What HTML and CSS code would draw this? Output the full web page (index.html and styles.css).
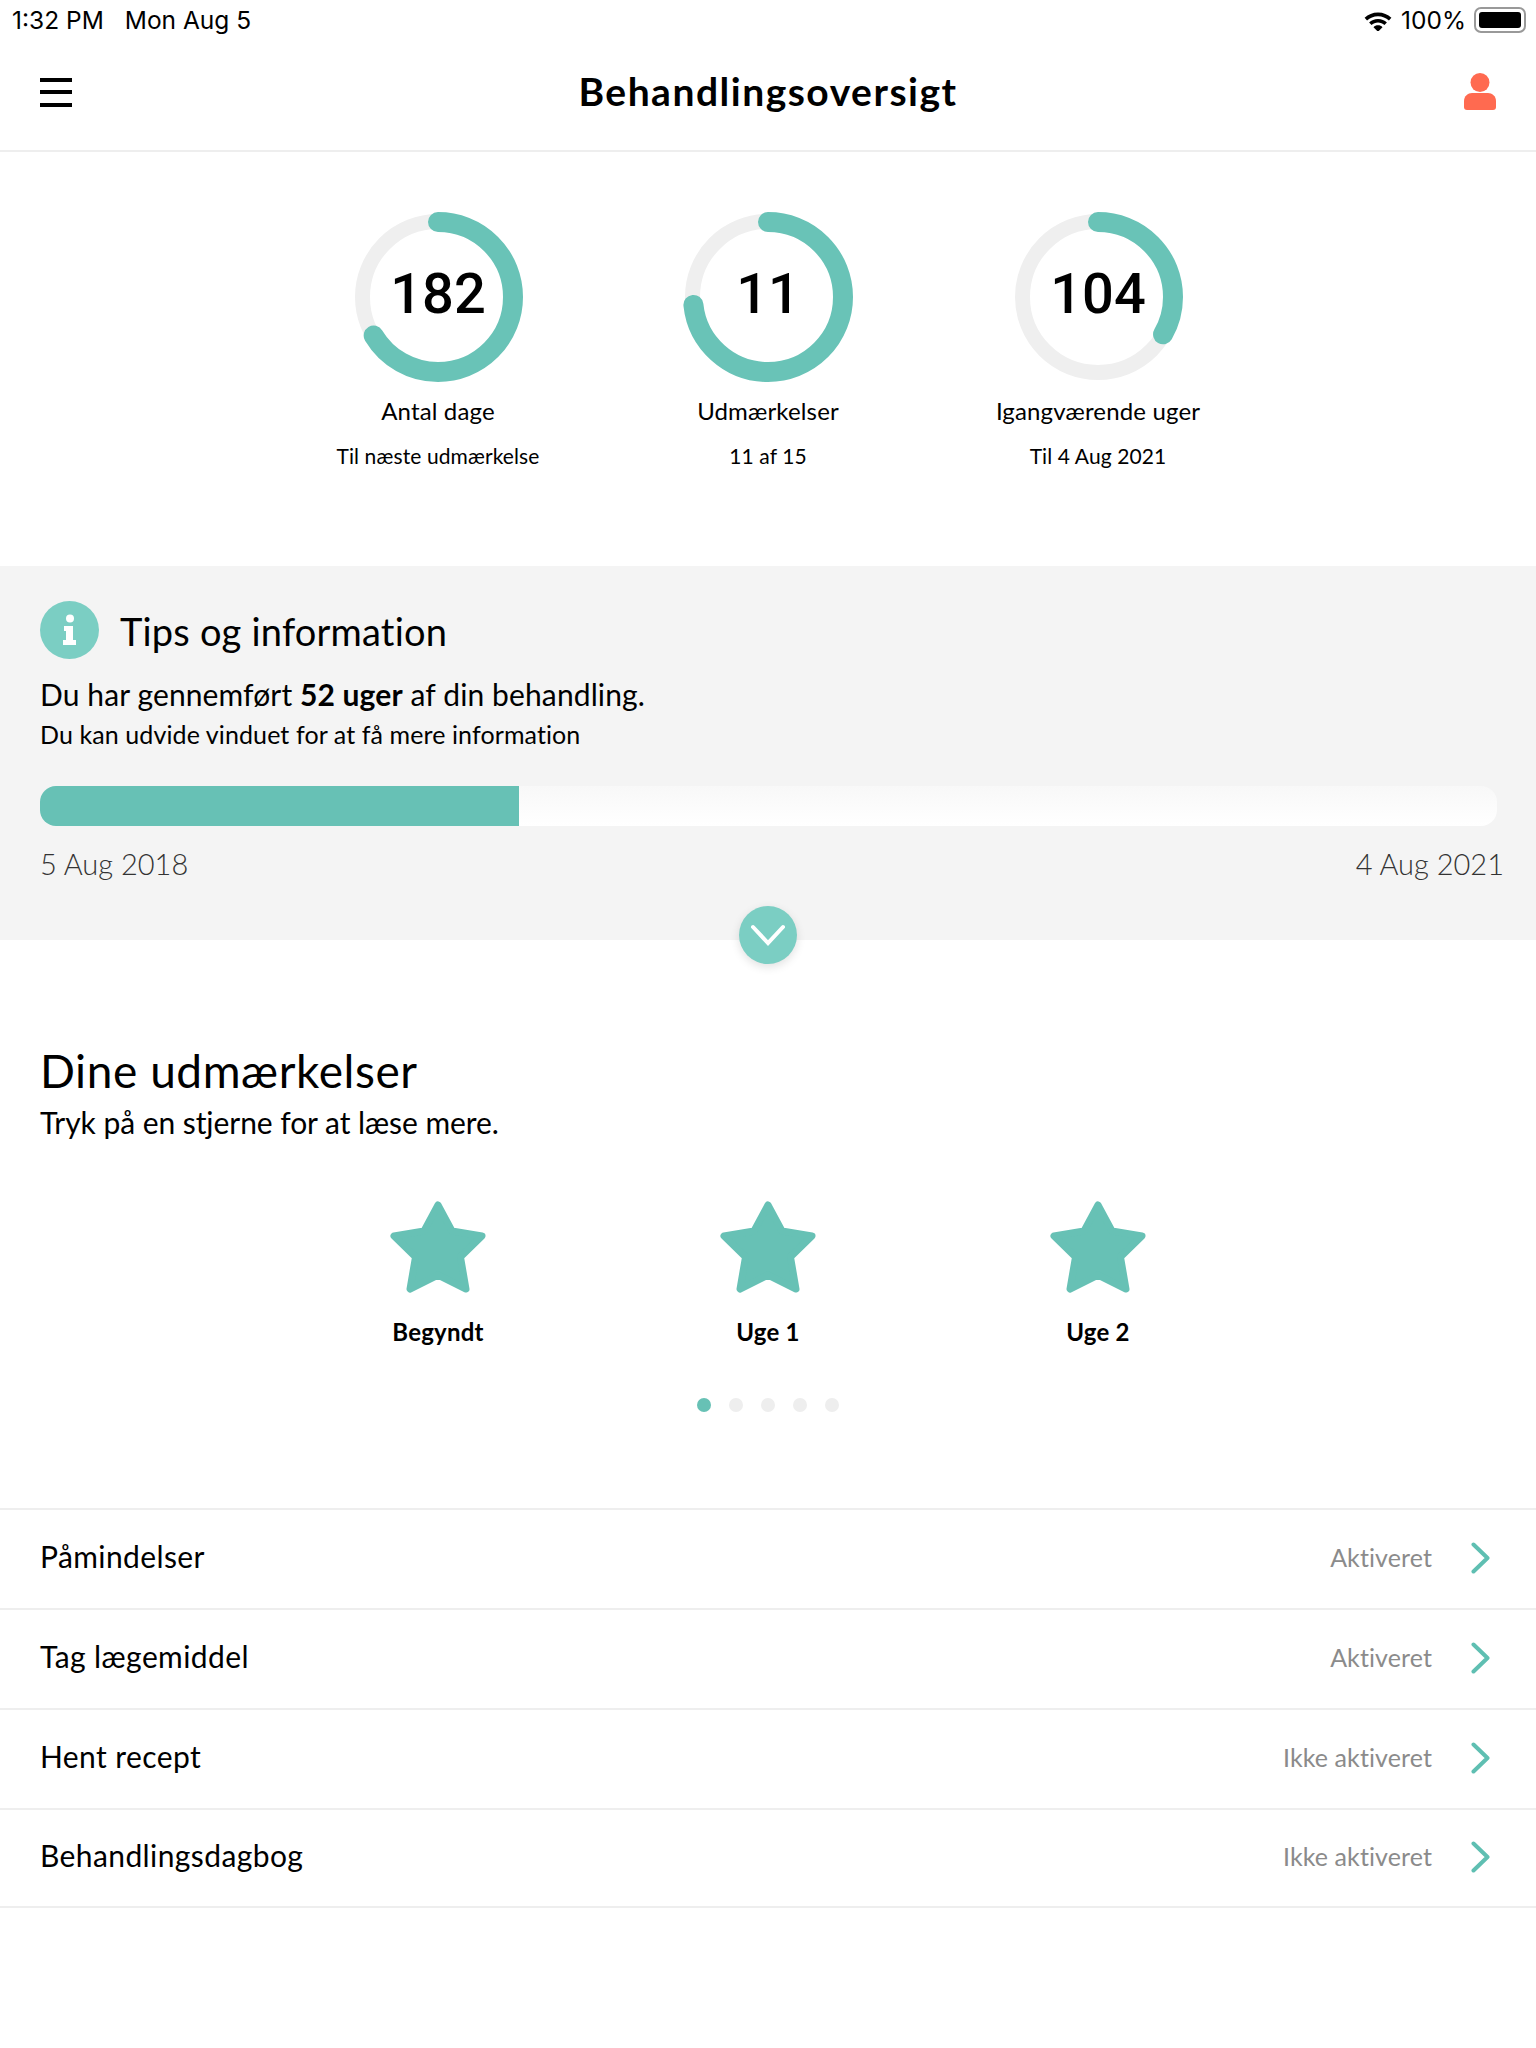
FILE: index.html
```html
<!DOCTYPE html>
<html lang="da">
<head>
	<meta charset="UTF-8">
	<title>Behandlingsoversigt</title>
	<link rel="stylesheet" href="styles.css">
</head>
<body>
	<div class="statusbar">
		<div class="status-left"><span>1:32 PM</span><span>Mon Aug 5</span></div>
		<div class="status-right">
			<svg class="wifi" width="30" height="22" viewBox="0 0 28 20"><path d="M14 3C9 3 4.800 4.900 1.500 8l2.300 2.400C6.500 7.900 10 6.400 14 6.400s7.500 1.500 10.200 4L26.500 8C23.200 4.900 19 3 14 3z"/><path d="M14 9c-3.300 0-6.200 1.300-8.300 3.300L8 14.700c1.600-1.500 3.700-2.400 6-2.400s4.400 0.900 6 2.400l2.300-2.400C20.200 10.300 17.300 9 14 9z"/><path d="M14 15c-1.700 0-3.100 0.600-4.200 1.700L14 21l4.200-4.300C17.100 15.600 15.700 15 14 15z"/></svg>
			<span>100%</span>
			<div class="battery"><div class="battery-level"></div></div>
		</div>
	</div>

	<header class="topbar">
		<div class="burger"><span></span><span></span><span></span></div>
		<h1>Behandlingsoversigt</h1>
		<svg class="person" width="32" height="38" viewBox="0 0 32 38"><ellipse cx="16" cy="9.500" rx="9.500" ry="9.500"/><path d="M0 34v-6c0-5 4-8 8-8h16c4 0 8 3 8 8v6c0 2-1 3-3 3H3c-2 0-3-1-3-3z"/></svg>
	</header>

	<section class="summary">
		<div class="stat">
			<div class="ring">
				<svg width="174" height="174" viewBox="0 0 174 174"><circle class="ring-track" cx="87" cy="87" r="75.500"/><circle class="ring-value" cx="87" cy="87" r="75" pathLength="100" stroke-dasharray="66.4 100"/></svg>
				<span class="ring-number">182</span>
			</div>
			<div class="stat-label">Antal dage</div>
			<div class="stat-sub">Til næste udmærkelse</div>
		</div>
		<div class="stat">
			<div class="ring">
				<svg width="174" height="174" viewBox="0 0 174 174"><circle class="ring-track" cx="87" cy="87" r="75.500"/><circle class="ring-value" cx="87" cy="87" r="75" pathLength="100" stroke-dasharray="73.3 100"/></svg>
				<span class="ring-number">11</span>
			</div>
			<div class="stat-label">Udmærkelser</div>
			<div class="stat-sub">11 af 15</div>
		</div>
		<div class="stat">
			<div class="ring">
				<svg width="174" height="174" viewBox="0 0 174 174"><circle class="ring-track" cx="87" cy="87" r="75.500"/><circle class="ring-value" cx="87" cy="87" r="75" pathLength="100" stroke-dasharray="33.3 100"/></svg>
				<span class="ring-number">104</span>
			</div>
			<div class="stat-label">Igangværende uger</div>
			<div class="stat-sub">Til 4 Aug 2021</div>
		</div>
	</section>

	<section class="tips">
		<div class="tips-head">
			<div class="info-icon">
				<svg width="16" height="32" viewBox="0 0 16 32"><circle cx="8" cy="4.500" r="4"/><path d="M2 12h9v14h3v5H1v-5h3v-9H2z"/></svg>
			</div>
			<h2>Tips og information</h2>
		</div>
		<p class="tips-text">Du har gennemført <b>52 uger</b> af din behandling.</p>
		<p class="tips-small">Du kan udvide vinduet for at få mere information</p>
		<div class="progress"><div class="progress-fill" style="width:32.9%"></div></div>
		<div class="dates"><span>5 Aug 2018</span><span>4 Aug 2021</span></div>
		<div class="toggle">
			<svg width="36" height="22" viewBox="0 0 36 22"><path d="M3 3l15 16L33 3"/></svg>
		</div>
	</section>

	<section class="awards">
		<h2>Dine udmærkelser</h2>
		<p class="awards-text">Tryk på en stjerne for at læse mere.</p>
		<div class="stars">
			<div class="star-item">
				<svg class="star" width="96" height="92" viewBox="0 0 96 92"><polygon points="48,4 62,30 92,35 70.500,56 76,88 48,74 20,88 25.500,56 4,35 34,30"/></svg>
				<div class="star-name">Begyndt</div>
			</div>
			<div class="star-item">
				<svg class="star" width="96" height="92" viewBox="0 0 96 92"><polygon points="48,4 62,30 92,35 70.500,56 76,88 48,74 20,88 25.500,56 4,35 34,30"/></svg>
				<div class="star-name">Uge 1</div>
			</div>
			<div class="star-item">
				<svg class="star" width="96" height="92" viewBox="0 0 96 92"><polygon points="48,4 62,30 92,35 70.500,56 76,88 48,74 20,88 25.500,56 4,35 34,30"/></svg>
				<div class="star-name">Uge 2</div>
			</div>
		</div>
		<div class="pager"><span class="on"></span><span></span><span></span><span></span><span></span></div>
	</section>

	<div class="list">
		<div class="row">
			<span class="row-name">Påmindelser</span>
			<span class="row-state">Aktiveret</span>
			<svg class="chevron" width="20" height="32" viewBox="0 0 20 32"><path d="M2.500 2.500L16.500 16L2.500 29.500"/></svg>
		</div>
		<div class="row">
			<span class="row-name">Tag lægemiddel</span>
			<span class="row-state">Aktiveret</span>
			<svg class="chevron" width="20" height="32" viewBox="0 0 20 32"><path d="M2.500 2.500L16.500 16L2.500 29.500"/></svg>
		</div>
		<div class="row">
			<span class="row-name">Hent recept</span>
			<span class="row-state">Ikke aktiveret</span>
			<svg class="chevron" width="20" height="32" viewBox="0 0 20 32"><path d="M2.500 2.500L16.500 16L2.500 29.500"/></svg>
		</div>
		<div class="row">
			<span class="row-name">Behandlingsdagbog</span>
			<span class="row-state">Ikke aktiveret</span>
			<svg class="chevron" width="20" height="32" viewBox="0 0 20 32"><path d="M2.500 2.500L16.500 16L2.500 29.500"/></svg>
		</div>
	</div>
</body>
</html>
```

FILE: styles.css
```css
* {
	box-sizing: border-box;
}
body {
	margin: 0;
	background: #fff;
	color: #000;
	font-family: "Lato", "Noto Sans", sans-serif;
}
h1, h2, p {
	margin: 0;
	font-weight: 400;
}

/* status bar */
.statusbar {
	display: flex;
	justify-content: space-between;
	align-items: center;
	height: 40px;
	padding: 0 10px 0 12px;
	font-family: "Inter", sans-serif;
	font-size: 24.500px;
}
.status-left {
	display: flex;
	gap: 21px;
}
.status-right {
	display: flex;
	align-items: center;
	gap: 8px;
}
.wifi {
	fill: #000;
}
.battery {
	width: 52px;
	height: 26px;
	padding: 3px;
	border: 2px solid #999;
	border-radius: 7px;
}
.battery-level {
	height: 100%;
	background: #000;
	border-radius: 3px;
}

/* header */
.topbar {
	display: flex;
	justify-content: space-between;
	align-items: center;
	height: 112px;
	padding: 0 40px 6px;
	border-bottom: 2px solid #eee;
}
.topbar h1 {
	padding-bottom: 3px;
	font-size: 39px;
	font-weight: 700;
	letter-spacing: 1.5px;
}
.burger {
	display: flex;
	flex-direction: column;
	gap: 8.500px;
	width: 32px;
}
.burger span {
	height: 4px;
	background: #000;
}
.person {
	fill: #ff6a50;
}

/* rings */
.summary {
	display: flex;
	justify-content: center;
	height: 414px;
	padding-top: 58px;
}
.stat {
	display: flex;
	flex-direction: column;
	align-items: center;
	width: 330px;
}
.ring {
	position: relative;
	width: 174px;
	height: 174px;
}
.ring svg {
	display: block;
	transform: rotate(-90deg);
}
.ring circle {
	fill: none;
}
.ring-track {
	stroke: #efefef;
	stroke-width: 15;
}
.ring-value {
	stroke: #69c3b7;
	stroke-width: 20;
	stroke-linecap: round;
}
.ring-number {
	position: absolute;
	left: 0;
	right: 0;
	top: 49px;
	font-family: "Roboto", sans-serif;
	font-size: 56px;
	font-weight: 500;
	line-height: 70px;
	text-align: center;
}
.stat-label {
	margin-top: 11px;
	font-size: 24px;
	line-height: 32px;
	letter-spacing: .15px;
}
.stat-sub {
	margin-top: 13px;
	font-size: 21px;
	line-height: 32px;
	letter-spacing: .1px;
}

/* tips */
.tips {
	position: relative;
	height: 374px;
	padding: 35px 32px 0 40px;
	background: #f4f4f4;
}
.tips-head {
	display: flex;
	align-items: center;
	gap: 21px;
}
.info-icon {
	display: flex;
	justify-content: center;
	align-items: center;
	width: 59px;
	height: 58px;
	border-radius: 50%;
	background: #7bcec3;
}
.info-icon svg {
	fill: #fff;
}
.tips-head h2 {
	padding-top: 2px;
	font-size: 38px;
	letter-spacing: .2px;
}
.tips-text {
	margin-top: 15px;
	font-size: 30px;
	line-height: 40px;
	letter-spacing: .12px;
}
.tips-text b {
	font-weight: 700;
}
.tips-small {
	margin-top: 2px;
	font-size: 25px;
	line-height: 36px;
	letter-spacing: .1px;
}
.progress {
	margin: 34px 7px 0 0;
	height: 40px;
	border-radius: 16px;
	background: linear-gradient(#f8f8f8, #fff);
	overflow: hidden;
}
.progress-fill {
	height: 100%;
	background: #67c1b5;
}
.dates {
	display: flex;
	justify-content: space-between;
	margin-top: 18px;
	font-size: 29px;
	font-weight: 300;
	line-height: 40px;
	color: #333;
}
.toggle {
	position: absolute;
	left: 739px;
	bottom: -24px;
	display: flex;
	justify-content: center;
	align-items: center;
	width: 58px;
	height: 58px;
	border-radius: 50%;
	background: #7bcec3;
	box-shadow: 0 3px 10px rgba(0,0,0,.12);
}
.toggle svg {
	fill: none;
	stroke: #fff;
	stroke-width: 4;
	stroke-linecap: round;
}

/* awards */
.awards {
	height: 568px;
	padding-top: 103px;
}
.awards h2 {
	padding-left: 40px;
	font-size: 46px;
	line-height: 56px;
	letter-spacing: .57px;
}
.awards-text {
	padding-left: 40px;
	margin-top: 3px;
	font-size: 30px;
	line-height: 40px;
	letter-spacing: -.06px;
}
.stars {
	display: flex;
	justify-content: center;
	margin-top: 59px;
}
.star-item {
	display: flex;
	flex-direction: column;
	align-items: center;
	width: 330px;
}
.star {
	fill: #67c1b5;
	stroke: #67c1b5;
	stroke-width: 7;
	stroke-linejoin: round;
}
.star-name {
	margin-top: 23px;
	font-size: 24px;
	font-weight: 700;
	line-height: 32px;
	letter-spacing: .2px;
}
.pager {
	display: flex;
	justify-content: center;
	gap: 18px;
	margin-top: 50px;
}
.pager span {
	width: 14px;
	height: 14px;
	border-radius: 50%;
	background: #eee;
}
.pager span.on {
	background: #67c1b5;
}

/* list */
.list {
	border-bottom: 2px solid #eee;
}
.row {
	display: flex;
	align-items: center;
	height: 100px;
	padding: 0 45px 0 40px;
	border-top: 2px solid #eee;
}
.row:last-child {
	height: 98px;
}
.row-name {
	flex: 1;
	padding-bottom: 6px;
	font-size: 30px;
	letter-spacing: .4px;
}
.row-state {
	margin-right: 39px;
	padding-bottom: 5px;
	font-size: 25px;
	letter-spacing: .1px;
	color: #8b8b8b;
}
.chevron {
	margin-bottom: 2px;
	fill: none;
	stroke: #5fbfb2;
	stroke-width: 4;
	stroke-linecap: round;
	stroke-linejoin: round;
}
```
